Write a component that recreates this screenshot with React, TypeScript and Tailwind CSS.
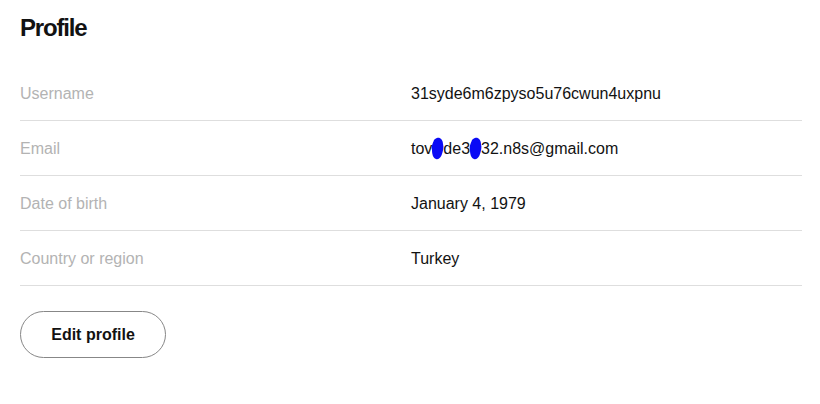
import React from "react"

function Scribble() {
  return (
    <span className="relative inline-block h-[16px] w-[11px] align-middle">
      <svg
        className="absolute left-[-1px] top-[-5px]"
        width="14"
        height="23"
        viewBox="0 0 14 23"
      >
        <path
          d="M6 1 C9 0 12 3 12 7 C13 10 12 14 11 17 C10 20 8 23 5 22 C2 21 1 17 1 13 C0 9 2 6 3 3 C4 2 5 1 6 1 Z"
          fill="#0a0af5"
        />
      </svg>
    </span>
  )
}

const rows: { label: string; value: React.ReactNode }[] = [
  { label: "Username", value: "31syde6m6zpyso5u76cwun4uxpnu" },
  {
    label: "Email",
    value: (
      <>
        tov
        <Scribble />
        de3
        <Scribble />
        32.n8s@gmail.com
      </>
    ),
  },
  { label: "Date of birth", value: "January 4, 1979" },
  { label: "Country or region", value: "Turkey" },
]

export default function App() {
  return (
    <div className="min-h-[404px] w-[820px] bg-white px-5 pt-3 font-['Liberation_Sans',Arial,sans-serif]">
      <h1 className="text-[24px] font-bold leading-8 tracking-[-1.2px] text-[#121212]">Profile</h1>

      <div className="mt-[22px] w-[782px]">
        {rows.map((row) => (
          <div
            key={row.label}
            className="grid h-[55px] grid-cols-[391px_1fr] items-center border-b border-[#dedede] pt-[2px] text-[16px]"
          >
            <div className="text-[#b3b3b3]">{row.label}</div>
            <div className="whitespace-nowrap text-[#121212]">{row.value}</div>
          </div>
        ))}
      </div>

      <button className="mt-[25px] h-[47px] w-[146px] rounded-full border border-[#878787] text-[16px] font-bold text-[#121212]">
        Edit profile
      </button>
    </div>
  )
}
